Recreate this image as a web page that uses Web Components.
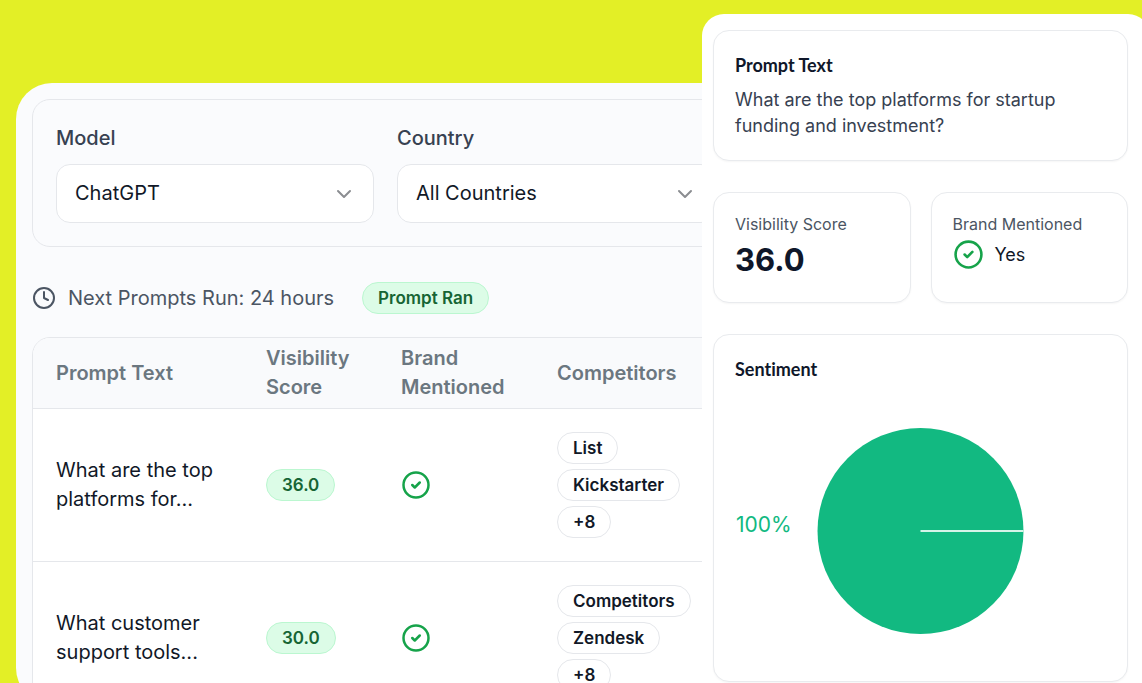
<!DOCTYPE html>
<html lang="en">
<head>
<meta charset="utf-8">
<meta name="viewport" content="width=device-width, initial-scale=1">
<title>Prompt visibility</title>
<style>
  html, body { margin: 0; height: 100%; }
  body { overflow: hidden; background: #e3ef26; font-family: Inter, "Liberation Sans", sans-serif; color: #111827; }
</style>
</head>
<body>
<prompt-page></prompt-page>
<script>
const define = (name, html, setup) => {
  const template = document.createElement('template');
  template.innerHTML = html;
  customElements.define(name, class extends HTMLElement {
    constructor() {
      super();
      this.attachShadow({ mode: 'open' }).append(template.content.cloneNode(true));
    }
    connectedCallback() { if (setup) setup(this, this.shadowRoot); }
  });
};

define('check-icon', `
  <style>
    :host { display: block; width: var(--size, 30px); height: var(--size, 30px); color: #16a34a; }
    svg { display: block; width: 100%; height: 100%; }
  </style>
  <svg viewBox="0 0 24 24" fill="none" stroke="currentColor" stroke-width="2" stroke-linecap="round" stroke-linejoin="round" role="img" aria-label="Mentioned"><circle cx="12" cy="12" r="10"/><path d="m9 12 2 2 4-4"/></svg>`);

define('pill-badge', `
  <style>
    :host { display: inline-block; box-sizing: border-box; height: 32px; padding: 0 15px; border: 1px solid #e5e7eb; border-radius: 16px;
      font-size: 17px; line-height: 30px; font-weight: 600; color: #111827; white-space: nowrap; background: #fff; }
    :host([tone="green"]) { background: #dcfce7; border-color: #bbf7d0; color: #166534; }
  </style>
  <slot></slot>`);

define('select-field', `
  <style>
    :host { display: flex; flex-direction: column; gap: 10px; }
    label { font-size: 20px; line-height: 31px; font-weight: 500; color: #374151; }
    .box { display: grid; align-items: center; }
    select, svg { grid-area: 1 / 1; }
    select { appearance: none; box-sizing: border-box; width: 100%; height: 59px; margin: 0; padding: 0 48px 0 18px; border: 1px solid #e5e7eb;
      border-radius: 14px; background: #fff; font: 400 20px/29px Inter, "Liberation Sans", sans-serif; color: #111827; }
    svg { justify-self: end; width: 24px; height: 24px; margin-right: 18px; pointer-events: none; }
  </style>
  <label for="field"></label>
  <div class="box">
    <select id="field"><option></option></select>
    <svg viewBox="0 0 24 24" fill="none" stroke="#8b8d91" stroke-width="2" stroke-linecap="round" stroke-linejoin="round" aria-hidden="true"><path d="m6 9 6 6 6-6"/></svg>
  </div>`, (host, root) => {
    root.querySelector('label').textContent = host.getAttribute('label');
    root.querySelector('option').textContent = host.getAttribute('value');
  });

define('filter-bar', `
  <style>
    :host { display: grid; grid-template-columns: repeat(3, 318px); gap: 23px; padding: 23px; border: 1px solid #e5e7eb; border-radius: 18px; }
  </style>
  <slot></slot>`);

define('run-status', `
  <style>
    :host { display: flex; align-items: center; height: 32px; font-size: 20px; line-height: 29px; color: #4b5563; white-space: nowrap; }
    svg { width: 24px; height: 24px; margin-right: 12px; }
    pill-badge { margin-left: 28px; }
  </style>
  <svg viewBox="0 0 24 24" fill="none" stroke="currentColor" stroke-width="2" stroke-linecap="round" stroke-linejoin="round" aria-hidden="true"><circle cx="12" cy="12" r="10"/><path d="M12 6v6l4 2"/></svg>
  <span>Next Prompts Run: 24 hours</span>
  <pill-badge tone="green">Prompt Ran</pill-badge>`);

define('prompt-table', `
  <style>
    :host { display: block; border: 1px solid #e5e7eb; border-radius: 18px; overflow: hidden; background: #fff; }
    table { width: 100%; table-layout: fixed; border-collapse: separate; border-spacing: 0; font-size: 20px; line-height: 29px; }
    th, td { padding: 0 23px; text-align: left; vertical-align: middle; border-bottom: 1px solid #e5e7eb; }
    th { height: 70px; padding-right: 8px; background: #f9fafc; font-weight: 600; color: #6b7780; }
    td { padding-top: 23px; padding-bottom: 23px; }
    th:nth-child(1) { width: 179px; }
    th:nth-child(2) { width: 104px; }
    th:nth-child(3) { width: 125px; }
    tbody tr:last-child td { border-bottom: 0; }
    .pills { display: flex; flex-direction: column; align-items: flex-start; gap: 5px; }
    pill-badge { vertical-align: middle; }
  </style>
  <table>
    <thead><tr><th>Prompt Text</th><th>Visibility<br>Score</th><th>Brand<br>Mentioned</th><th>Competitors</th></tr></thead>
    <tbody>
      <tr>
        <td>What are the top<br>platforms for...</td>
        <td><pill-badge tone="green">36.0</pill-badge></td>
        <td><check-icon></check-icon></td>
        <td><div class="pills"><pill-badge>List</pill-badge><pill-badge>Kickstarter</pill-badge><pill-badge>+8</pill-badge></div></td>
      </tr>
      <tr>
        <td>What customer<br>support tools...</td>
        <td><pill-badge tone="green">30.0</pill-badge></td>
        <td><check-icon></check-icon></td>
        <td><div class="pills"><pill-badge>Competitors</pill-badge><pill-badge>Zendesk</pill-badge><pill-badge>+8</pill-badge></div></td>
      </tr>
    </tbody>
  </table>`);

define('dashboard-panel', `
  <style>
    :host { display: block; box-sizing: border-box; overflow: hidden; padding: 16px 0 22px 16px; border-radius: 36px 0 0 36px; background: #fafbfd; }
    .content { display: flex; flex-direction: column; min-width: 1048px; }
    run-status { margin: 35px 0 23px; }
  </style>
  <div class="content">
    <filter-bar>
      <select-field label="Model" value="ChatGPT"></select-field>
      <select-field label="Country" value="All Countries"></select-field>
    </filter-bar>
    <run-status></run-status>
    <prompt-table></prompt-table>
  </div>`);

define('info-card', `
  <style>
    :host { display: block; box-sizing: border-box; padding: 21px; border: 1px solid #e9ebee; border-radius: 16px; background: #fff; box-shadow: 0 1px 2px rgb(0 0 0 / 4%); }
    h2 { margin: 0; font: 700 18px/26px Lato, "Open Sans", sans-serif; font-variant-ligatures: none; color: #0f172a; }
    h3 { margin: 0 0 5px; font-size: 16px; line-height: 20px; font-weight: 400; color: #4b5563; white-space: nowrap; }
  </style>
  <slot></slot>`, (host, root) => {
    if (root.querySelector('h2, h3')) return;
    const level = host.hasAttribute('metric') ? 'h3' : 'h2';
    const heading = document.createElement(level);
    heading.textContent = host.getAttribute('heading');
    root.querySelector('slot').before(heading);
  });

define('sentiment-chart', `
  <style>
    :host { display: block; margin-top: 20px; height: 258px; }
    svg { display: block; width: 100%; height: 100%; overflow: visible; }
    text { font: 400 21px Inter, "Liberation Sans", sans-serif; fill: #10b981; }
  </style>
  <svg role="img" aria-label="Sentiment: 100%">
    <text x="1" y="130">100%</text>
    <svg x="50%" y="50%" overflow="visible">
      <circle r="103" fill="#12b981"/>
      <path d="M0 0H103" stroke="#d5f4e8" stroke-width="2"/>
    </svg>
  </svg>`);

define('detail-panel', `
  <style>
    :host { display: block; box-sizing: border-box; padding: 16px 22px 32px 11px; border-radius: 22px; background: #fff; }
    .stack { display: flex; flex-direction: column; gap: 31px; }
    .pair { display: grid; grid-template-columns: 1fr 1fr; gap: 20px; }
    p { margin: 9px 0 0; font-size: 18px; line-height: 26px; color: #374151; }
    .score { font-size: 31px; line-height: 42px; font-weight: 700; color: #0f172a; }
    .yes { display: flex; align-items: center; gap: 11px; height: 31px; font-size: 18px; line-height: 26px; color: #111827; }
    check-icon { --size: 31px; }
  </style>
  <div class="stack">
    <info-card heading="Prompt Text"><p>What are the top platforms for startup<br>funding and investment?</p></info-card>
    <div class="pair">
      <info-card metric heading="Visibility Score"><div class="score">36.0</div></info-card>
      <info-card metric heading="Brand Mentioned"><div class="yes"><check-icon></check-icon><span>Yes</span></div></info-card>
    </div>
    <info-card heading="Sentiment"><sentiment-chart></sentiment-chart></info-card>
  </div>`);

define('prompt-page', `
  <style>
    :host { display: grid; grid-template-columns: minmax(0, 1fr) 448px; align-items: start; height: 100vh; overflow: hidden; padding-left: 16px; margin-right: -8px; }
    dashboard-panel { margin-top: 83px; height: 621px; }
    detail-panel { margin-top: 14px; }
  </style>
  <dashboard-panel></dashboard-panel>
  <detail-panel></detail-panel>`);
</script>
</body>
</html>
